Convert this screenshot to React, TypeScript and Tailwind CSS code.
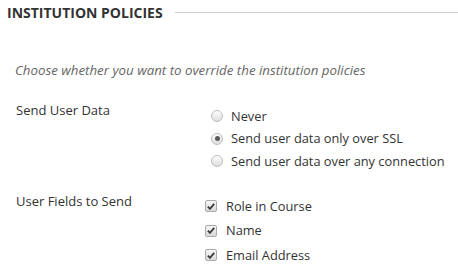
import React from "react";

const Radio = ({ checked }: { checked?: boolean }) => (
  <span className="w-[12px] h-[12px] rounded-full border border-[#bdbdbd] bg-gradient-to-b from-[#fdfdfd] to-[#dedede] flex items-center justify-center shrink-0">
    {checked && <span className="w-[5px] h-[5px] rounded-full bg-[#5a5a5a]" />}
  </span>
);

const Check = () => (
  <span className="w-[12px] h-[12px] rounded-[2px] border border-[#ababab] bg-gradient-to-b from-[#f6f6f6] to-[#d9d9d9] flex items-center justify-center shrink-0">
    <svg width="8" height="7" viewBox="0 0 8 7">
      <path d="M0.8 3.6 L3 5.8 L7.2 0.9" stroke="#3a3a3a" strokeWidth="1.8" fill="none" />
    </svg>
  </span>
);

export default function App() {
  return (
    <div
      className="w-[458px] h-[276px] bg-white text-[#333] overflow-hidden"
      style={{ fontFamily: '"Open Sans", sans-serif' }}
    >
      <div className="flex items-center h-[25px] pl-[7px]">
        <h2 className="text-[14px] font-bold uppercase text-[#333] leading-[18px]">
          Institution Policies
        </h2>
        <div className="flex-1 ml-[12px] h-px bg-[#cfcfcf]" />
      </div>
      <p className="mt-[36px] pl-[15px] text-[13.3px] italic text-[#666] leading-[18px] whitespace-nowrap">
        Choose whether you want to override the institution policies
      </p>
      <div className="flex mt-[21px] pl-[16px]">
        <div className="w-[195px] text-[13px] leading-[18px] pt-[0.5px]">Send User Data</div>
        <div className="flex flex-col pt-[5px]">
          {[
            { t: "Never" },
            { t: "Send user data only over SSL", c: true },
            { t: "Send user data over any connection" },
          ].map((o) => (
            <label key={o.t} className="flex items-center h-[22.5px] gap-[8px] text-[12.8px] whitespace-nowrap">
              <Radio checked={o.c} />
              <span>{o.t}</span>
            </label>
          ))}
        </div>
      </div>
      <div className="flex mt-[19px] pl-[16px]">
        <div className="w-[189px] text-[13px] leading-[18px]">User Fields to Send</div>
        <div className="flex flex-col pt-[2.5px]">
          {["Role in Course", "Name", "Email Address"].map((t) => (
            <label key={t} className="flex items-center h-[24.5px] gap-[9px] text-[12.8px] whitespace-nowrap">
              <Check />
              <span>{t}</span>
            </label>
          ))}
        </div>
      </div>
    </div>
  );
}
